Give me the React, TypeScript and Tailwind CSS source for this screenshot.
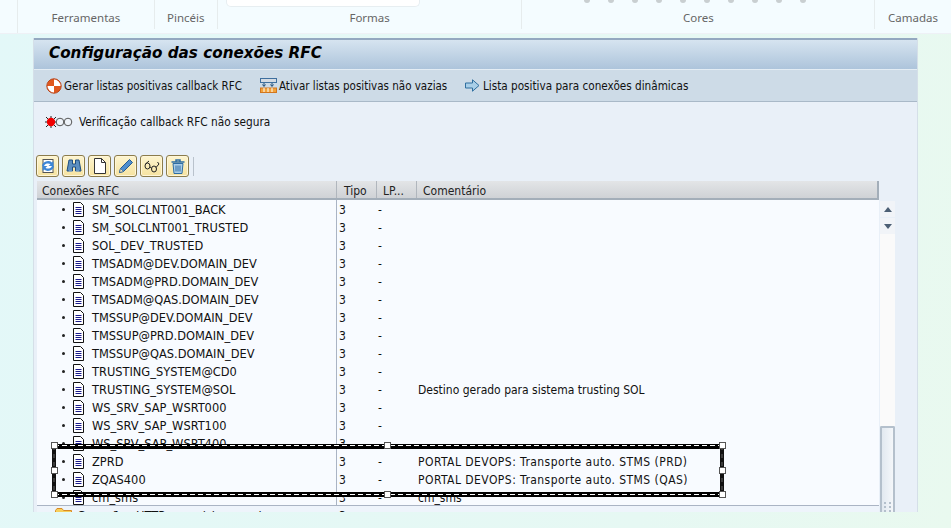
import React from 'react';

const TAHOMA = 'font-["DejaVu_Sans_Condensed","Noto_Sans",sans-serif]';

const rows: [string, string][] = [
  ['SM_SOLCLNT001_BACK', ''],
  ['SM_SOLCLNT001_TRUSTED', ''],
  ['SOL_DEV_TRUSTED', ''],
  ['TMSADM@DEV.DOMAIN_DEV', ''],
  ['TMSADM@PRD.DOMAIN_DEV', ''],
  ['TMSADM@QAS.DOMAIN_DEV', ''],
  ['TMSSUP@DEV.DOMAIN_DEV', ''],
  ['TMSSUP@PRD.DOMAIN_DEV', ''],
  ['TMSSUP@QAS.DOMAIN_DEV', ''],
  ['TRUSTING_SYSTEM@CD0', ''],
  ['TRUSTING_SYSTEM@SOL', 'Destino gerado para sistema trusting SOL'],
  ['WS_SRV_SAP_WSRT000', ''],
  ['WS_SRV_SAP_WSRT100', ''],
  ['WS_SRV_SAP_WSRT400', ''],
  ['ZPRD', 'PORTAL DEVOPS: Transporte auto. STMS (PRD)'],
  ['ZQAS400', 'PORTAL DEVOPS: Transporte auto. STMS (QAS)'],
  ['cm_sms', 'cm_sms'],
];

const DocIcon = () => (
  <svg width="13" height="15" viewBox="0 0 13 15" className="shrink-0">
    <path d="M1.5.5h7l3 3v11h-10z" fill="#fff" stroke="#111" />
    <path d="M3.5 5.5h6M3.5 7.5h6M3.5 9.5h6M3.5 11.5h6" stroke="#1a1a8c" />
  </svg>
);

const Row = ({ name, comment }: { name: string; comment: string }) => (
  <div className="flex h-[18px] shrink-0 items-center">
    <div className="flex h-full w-[299px] shrink-0 items-center pl-[25px]">
      <span className="mr-[7px] h-[3px] w-[3px] shrink-0 rounded-full bg-[#222]" />
      <DocIcon />
      <span className="ml-[7px] whitespace-nowrap pt-[2px] text-[12.7px]">{name}</span>
    </div>
    <div className="h-full w-px shrink-0 bg-[#aab4c4]" />
    <div className="w-[39px] shrink-0 pl-[2px] pt-[2px] text-[12px]">3</div>
    <div className="w-[40px] shrink-0 pl-[2px] pt-[2px] text-[12px]">-</div>
    <div className={`whitespace-nowrap pl-[2px] pt-[2px] text-[12px] ${comment.startsWith('PORTAL') ? 'tracking-[0.45px]' : ''}`}>{comment}</div>
  </div>
);

const ToolButton = ({ children }: { children: React.ReactNode }) => (
  <div className="flex h-[22px] w-[23px] items-center justify-center rounded-[3px] border border-[#8b7c4c] bg-[linear-gradient(#fdf5d0,#f6e3a0)] shadow-[inset_0_0_0_1px_#fff6d8]">
    {children}
  </div>
);

const RibbonSection = ({ label, width, last }: { label: string; width: string; last?: boolean }) => (
  <div className={`flex h-[29px] items-end justify-center pb-[2px] ${width} ${last ? '' : 'border-r border-[#e6eced]'}`}>
    {label}
  </div>
);

export default function App() {
  return (
    <div className={`relative flex h-[528px] w-[951px] flex-col overflow-hidden bg-[linear-gradient(100deg,#e3f8f8,#e6f8f3_70%,#e9f9ef)] text-[11.5px] leading-[18px] text-[#111] ${TAHOMA}`}>
      {/* paint ribbon */}
      <div className='relative flex h-[34px] shrink-0 border-b border-[#eef1f6] bg-[#f4fcff] pl-[17px] font-["Noto_Sans",sans-serif] text-[11.5px] text-[#666]'>
        <div className="w-0 border-l border-[#e6eced]" />
        <RibbonSection label="Ferramentas" width="w-[137px]" />
        <RibbonSection label="Pincéis" width="w-[63px]" />
        <RibbonSection label="Formas" width="w-[305px]" />
        <RibbonSection label="Cores" width="w-[353px]" />
        <RibbonSection label="Camadas" width="w-[76px]" last />
        <div className="absolute left-[226px] top-0 h-[7px] w-[194px] rounded-b-[5px] border border-t-0 border-[#e7eef1] bg-white" />
        <div className="absolute left-[584px] top-[-3px] flex gap-[18px]">
          {Array.from({ length: 10 }).map((_, i) => (
            <span key={i} className="h-[6px] w-[6px] rounded-full bg-[#c9cfd1]" />
          ))}
        </div>
      </div>

      {/* SAP window */}
      <div className="ml-[33px] mt-[4px] flex h-[474px] w-[885px] flex-col overflow-hidden border-x border-[#d5dfe8] bg-[#e9f0f8]">
        <div className="flex h-[31px] shrink-0 items-center border-t-2 border-[#93a8c0] bg-[linear-gradient(#d6e4f0,#adc4db)] pb-[3px] pl-[15px] text-black">
          <span className='font-["DejaVu_Sans",sans-serif] text-[15.2px] font-bold italic'>Configuração das conexões RFC</span>
        </div>
        <div className="flex h-[33px] shrink-0 items-center border-t border-b border-t-[#e4edf4] border-b-[#a9b9c8] bg-[#cddbe7] pl-[12px]">
          <svg width="16" height="16" viewBox="0 0 16 16" className="mr-[2px] shrink-0">
            <circle cx="8" cy="8" r="7.2" fill="#e0581e" stroke="#b9451a" />
            <path d="M8 8V1.5A6.5 6.5 0 0 1 14.5 8zM8 8v6.5A6.5 6.5 0 0 1 1.5 8z" fill="#fff" />
          </svg>
          <span className="w-[196px] whitespace-nowrap">Gerar listas positivas callback RFC</span>
          <svg width="17" height="15" viewBox="0 0 17 15" className="mr-[2px] shrink-0">
            <rect x=".5" y=".5" width="16" height="4" fill="#d4dbe3" stroke="#3e6f9e" />
            <path d="M4 5v3M2.5 6.5 4 8.5l1.5-2M12 5v3M10.5 6.5l1.5 2 1.5-2" stroke="#1f4e79" fill="none" />
            <rect x=".5" y="10" width="16" height="4.5" fill="#f2a33a" stroke="#d2761e" />
            <path d="M4 10v4M8 10v4M12 10v4" stroke="#fff" />
          </svg>
          <span className="w-[186px] whitespace-nowrap">Ativar listas positivas não vazias</span>
          <svg width="15" height="13" viewBox="0 0 15 13" className="mr-[3px] shrink-0">
            <path d="M.5 4h7V.8L14 6.5l-6.5 5.7V9h-7z" fill="#a9cfe8" stroke="#2f6f9f" />
          </svg>
          <span className="whitespace-nowrap text-[11.65px]">Lista positiva para conexões dinâmicas</span>
        </div>

        <div className="flex h-[38px] shrink-0 items-center pl-[11px] pt-px text-[11.75px]">
          <svg width="29" height="12" viewBox="0 0 29 12" className="mr-[5px] shrink-0">
            <path d="M1 1l10 10M11 1 1 11M6 0v12M0 6h12" stroke="#222" />
            <circle cx="6" cy="6" r="4.2" fill="#f00000" />
            <circle cx="15" cy="6" r="3.8" fill="#eef3f9" stroke="#555" />
            <circle cx="23" cy="6" r="3.8" fill="#eef3f9" stroke="#555" />
          </svg>
          Verificação callback RFC não segura
        </div>

        {/* tree toolbar */}
        <div className="mt-[15px] flex h-[22px] shrink-0 items-center gap-[3px] pl-[2px]">
          <ToolButton>
            <svg width="16" height="16" viewBox="0 0 16 16">
              <rect x="3" y="1.5" width="10" height="13" fill="#fff" stroke="#555" />
              <path d="M2 8a6 5.5 0 0 1 10-3.5L13.5 3v5h-5l2-1.7A4 3.5 0 0 0 4 8z" fill="#3c86d6" />
              <path d="M14 8a6 5.5 0 0 1-10 3.5L2.5 13V8h5l-2 1.7A4 3.5 0 0 0 12 8z" fill="#3c86d6" />
            </svg>
          </ToolButton>
          <ToolButton>
            <svg width="16" height="16" viewBox="0 0 16 16">
              <path d="M3 2h3.5v4h3V2H13l2 11H9.5V9h-3v4H1z" fill="#5c8fc0" stroke="#1e4d80" />
              <path d="M3 13h3M10 13h3" stroke="#9cc2e4" />
            </svg>
          </ToolButton>
          <ToolButton>
            <svg width="14" height="16" viewBox="0 0 14 16">
              <path d="M1.5.5h7l4 4v11h-11z" fill="#fff" stroke="#333" />
              <path d="M8.5.5v4h4" fill="none" stroke="#333" />
            </svg>
          </ToolButton>
          <ToolButton>
            <svg width="16" height="16" viewBox="0 0 16 16">
              <path d="M11.5 1.5l3 3-9 9-4 1 1-4z" fill="#4f8fce" stroke="#245a90" />
              <path d="M1.5 14.5l1-4 3 3z" fill="#f5e2b8" stroke="#245a90" strokeWidth=".6" />
            </svg>
          </ToolButton>
          <ToolButton>
            <svg width="18" height="14" viewBox="0 0 18 14" fill="none" stroke="#222" strokeWidth="1">
              <ellipse cx="4.5" cy="7" rx="2.5" ry="3" />
              <ellipse cx="11" cy="10" rx="2.5" ry="3" />
              <path d="M7 8l1.5 1M2.5 5 6 2M13 8.5 16 5 14.5 3" />
            </svg>
          </ToolButton>
          <ToolButton>
            <svg width="16" height="17" viewBox="0 0 16 17">
              <path d="M1.5 4h13M6 3.5V2h4v1.5" fill="none" stroke="#2e6da4" strokeWidth="1.5" />
              <path d="M3 5.5h10l-1 10H4z" fill="#a9cde8" stroke="#2e6da4" />
              <path d="M6 7.5v6M8 7.5v6M10 7.5v6" stroke="#2e6da4" />
            </svg>
          </ToolButton>
          <div className="ml-px h-[19px] w-px bg-[#b9c2cc]" />
        </div>

        {/* tree table */}
        <div className="mt-[4px] flex min-h-0 flex-1">
          <div className="ml-[3px] flex w-[842px] shrink-0 flex-col">
            <div className="flex h-[19px] shrink-0 items-center border-b-2 border-r-2 border-[#a3aeb9] bg-[linear-gradient(#e3e5e7,#cfd2d6)] text-[12px] text-[#222]">
              <div className="flex h-full w-[299px] items-center pl-[5px] pt-[2px]">Conexões RFC</div>
              <div className="flex h-full w-[40px] items-center border-l border-[#b0b6bd] pl-[7px] pt-[2px]">Tipo</div>
              <div className="flex h-full w-[40px] items-center border-l border-[#b0b6bd] pl-[6px] pt-[2px]">LP...</div>
              <div className="flex h-full items-center border-l border-[#b0b6bd] pl-[6px] pt-[2px]">Comentário</div>
            </div>
            <div className="flex h-[305px] shrink-0 flex-col bg-[#f8fbff]">
              {rows.map(([name, comment]) => (
                <Row key={name} name={name} comment={comment} />
              ))}
            </div>
            <div className="h-px shrink-0 bg-[#aab4c4]" />
            <div className="flex h-[18px] shrink-0 items-center bg-[#eef4fb] text-[12.7px]">
              <div className="flex w-[299px] items-center pl-[8px]">
                <span className="mr-[7px] h-[3px] w-[3px] bg-[#333]" />
                <svg width="17" height="14" viewBox="0 0 17 14" className="mr-[5px] shrink-0">
                  <path d="M.5 13.5V2.5L2 .5h5l1.5 2h8v11z" fill="#f8cf5a" stroke="#d98a24" />
                </svg>
                <span className="whitespace-nowrap pt-[2px]">Conexões HTTP com sistema externo</span>
              </div>
              <div className="w-px" />
              <div className="pl-[2px] pt-[2px] text-[12px]">3</div>
            </div>
          </div>

          {/* scroll bar */}
          <div className="ml-px flex w-[15px] shrink-0 flex-col pt-[20px]">
            <div className="flex h-[16px] shrink-0 items-center justify-center bg-[#f1f4f8]">
              <span className="h-0 w-0 border-x-[4px] border-b-[5px] border-x-transparent border-b-[#4c5f74]" />
            </div>
            <div className="mt-px flex h-[16px] shrink-0 items-center justify-center bg-[#f1f4f8]">
              <span className="h-0 w-0 border-x-[4px] border-t-[5px] border-x-transparent border-t-[#4c5f74]" />
            </div>
            <div className="h-[192px] shrink-0 bg-[#fafafa]" />
            <div className="flex h-[100px] w-[15px] shrink-0 flex-col justify-end rounded-t-[2px] border-2 border-b-0 border-[#b4c0cc] bg-[linear-gradient(90deg,#e2e9f0,#f4f7fa)] pb-[14px]">
              <div className="ml-[2px] grid w-[7px] grid-cols-2 gap-[2px]">
                {Array.from({ length: 6 }).map((_, i) => (
                  <span key={i} className="h-[2px] w-[2px] bg-[#b4c0cc]" />
                ))}
              </div>
            </div>
          </div>
        </div>
      </div>

      {/* selection frame drawn over the tree */}
      <svg width="951" height="528" className="pointer-events-none absolute left-0 top-0">
        <path d="M54 446.5H722M54 494.5H722" stroke="#000" strokeWidth="5" />
        <path d="M54 445.5H722M54 494.5H722" stroke="#fff" strokeDasharray="5 3" />
        <path d="M54 446V494M722 446V494" stroke="#111" strokeWidth="4" />
        <path d="M54 446V494M722 446V494" stroke="#666" strokeWidth="1" strokeDasharray="4 4" />
        {[[54, 445], [54, 470], [54, 494], [387, 445], [387, 494], [722, 445], [722, 470], [722, 494]].map(([x, y]) => (
          <rect key={`${x}-${y}`} x={x - 2.5} y={y - 2.5} width="6" height="6" fill="#fff" stroke="#555" />
        ))}
      </svg>
    </div>
  );
}
